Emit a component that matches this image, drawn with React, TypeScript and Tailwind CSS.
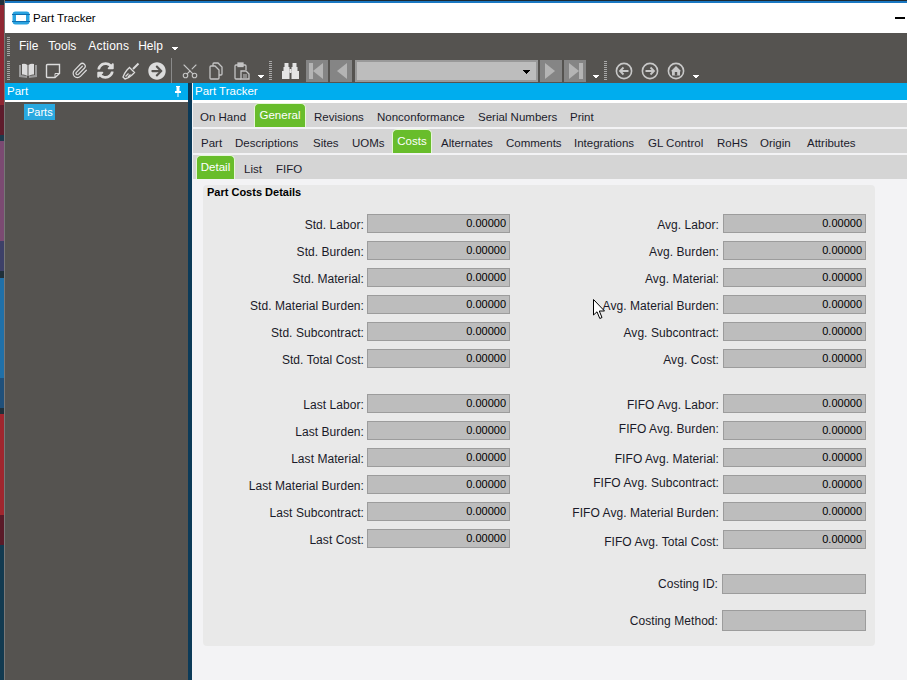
import type { ReactNode } from 'react'
import { Paperclip, Scissors } from 'lucide-react'
import { FaArrowCircleRight, FaSyncAlt } from 'react-icons/fa'

// desktop showing through on the left of the window
const desktop = [
  'h-[5px] bg-[#22323c]',
  'h-[100px] bg-[#8f2632]',
  'h-[30px] bg-[#5e1c2c]',
  'h-[6px] bg-[#1d3a4c]',
  'h-[100px] bg-[#7b4a72]',
  'h-[30px] bg-[#3d4068]',
  'h-[7px] bg-[#20303a]',
  'h-[100px] bg-[#2070a8]',
  'h-[30px] bg-[#20507a]',
  'h-[6px] bg-[#20303a]',
  'h-[101px] bg-[#a0262e]',
  'h-[30px] bg-[#5a1a28]',
  'h-[135px] bg-[#123a50]',
]

const topTabs = [
  { label: 'On Hand', cls: 'w-[55px] pl-[1px]' },
  { label: 'General', cls: 'w-[52px] mr-[8px]', active: true },
  { label: 'Revisions', cls: 'w-[63px]' },
  { label: 'Nonconformance', cls: 'w-[101px]' },
  { label: 'Serial Numbers', cls: 'w-[92px]' },
  { label: 'Print', cls: 'w-[40px]' },
]

const midTabs = [
  { label: 'Part', cls: 'w-[34px]' },
  { label: 'Descriptions', cls: 'w-[78px]' },
  { label: 'Sites', cls: 'w-[39px]' },
  { label: 'UOMs', cls: 'w-[40px]' },
  { label: 'Costs', cls: 'w-[40px] mr-[9px]', active: true },
  { label: 'Alternates', cls: 'w-[65px]' },
  { label: 'Comments', cls: 'w-[68px]' },
  { label: 'Integrations', cls: 'w-[74px]' },
  { label: 'GL Control', cls: 'w-[69px]' },
  { label: 'RoHS', cls: 'w-[43px]' },
  { label: 'Origin', cls: 'w-[47px]' },
  { label: 'Attributes', cls: 'w-[60px]' },
]

const subTabs = [
  { label: 'Detail', cls: 'w-[39px] mr-[9px]', active: true },
  { label: 'List', cls: 'w-[32px]' },
  { label: 'FIFO', cls: 'w-[40px]' },
]

type Row = { label: string; labelCls?: string; fieldCls?: string }

const stdRows: Row[] = [
  { label: 'Std. Labor:', labelCls: 'pt-[3px]' },
  { label: 'Std. Burden:', labelCls: 'pt-[2px]' },
  { label: 'Std. Material:', labelCls: 'pt-[2px]' },
  { label: 'Std. Material Burden:', labelCls: 'pt-[2px]' },
  { label: 'Std. Subcontract:', labelCls: 'pt-[2px]' },
  { label: 'Std. Total Cost:', labelCls: 'pt-[2px]' },
]

const avgRows: Row[] = [
  { label: 'Avg. Labor:', labelCls: 'pt-[3px]' },
  { label: 'Avg. Burden:', labelCls: 'pt-[3px]' },
  { label: 'Avg. Material:', labelCls: 'pt-[3px]' },
  { label: 'Avg. Material Burden:', labelCls: 'pt-[3px]' },
  { label: 'Avg. Subcontract:', labelCls: 'pt-[2px]' },
  { label: 'Avg. Cost:', labelCls: 'pt-[2px]' },
]

const lastRows: Row[] = [
  { label: 'Last Labor:', labelCls: 'pt-[2px]' },
  { label: 'Last Burden:', labelCls: 'pt-[2px]' },
  { label: 'Last Material:', labelCls: 'pt-[2px]' },
  { label: 'Last Material Burden:', labelCls: 'pt-[2px]' },
  { label: 'Last Subcontract:', labelCls: 'pt-[2px]' },
  { label: 'Last Cost:', labelCls: 'pt-[2px]' },
]

const fifoRows: Row[] = [
  { label: 'FIFO Avg. Labor:', labelCls: 'pt-[2px]' },
  { label: 'FIFO Avg. Burden:', labelCls: 'pb-[3px]' },
  { label: 'FIFO Avg. Material:', labelCls: 'pt-[2px]' },
  { label: 'FIFO Avg. Subcontract:', labelCls: 'pb-[3px]' },
  { label: 'FIFO Avg. Material Burden:', labelCls: 'pt-[2px]' },
  { label: 'FIFO Avg. Total Cost:', labelCls: 'pt-[6px]', fieldCls: 'mt-[1px]' },
]

function Grip({ cls }: { cls?: string }) {
  return (
    <div className={`flex w-[3px] flex-col gap-[1px] ${cls ?? ''}`}>
      {Array.from({ length: 10 }).map((_, i) => (
        <div key={i} className="h-[1px] w-[3px] bg-[#a8a8a8]" />
      ))}
    </div>
  )
}

function Caret({ cls }: { cls?: string }) {
  return (
    <div className={`flex flex-col items-center ${cls ?? ''}`}>
      <div className="h-[1px] w-[6px] bg-white" />
      <div className="h-[1px] w-[4px] bg-white" />
      <div className="h-[1px] w-[2px] bg-white" />
    </div>
  )
}

function Slot({ children }: { children: ReactNode }) {
  return <div className="flex h-[25px] w-[26px] items-center justify-center text-[#dcdcdc]">{children}</div>
}

function NavButton({ dir, end }: { dir: 'left' | 'right'; end?: boolean }) {
  const d = dir === 'left' ? 'M17 3 L7 11 L17 19 Z' : 'M5 3 L15 11 L5 19 Z'
  return (
    <div className="h-[22px] w-[22px] bg-[#858585]">
      <svg width="22" height="22" viewBox="0 0 22 22">
        <path d={d} fill="#b4b4b4" />
        {end && <rect x={dir === 'left' ? 3 : 15} y="3" width="4" height="16" fill="#b4b4b4" />}
      </svg>
    </div>
  )
}

function Tabs({ tabs, cls }: { tabs: { label: string; cls: string; active?: boolean }[]; cls: string }) {
  return (
    <div className={`flex h-[24px] items-end bg-[#d5d5d5] ${cls}`}>
      {tabs.map((t) =>
        t.active ? (
          <div
            key={t.label}
            className={`flex h-[24px] shrink-0 items-start justify-center rounded-t-[5px] border border-b-0 border-[#e6f7d8] bg-[#68bd2b] pt-[3px] text-white ${t.cls}`}
          >
            {t.label}
          </div>
        ) : (
          <div key={t.label} className={`h-[24px] shrink-0 pt-[6px] text-[#1c1c2c] ${t.cls}`}>
            {t.label}
          </div>
        ),
      )}
    </div>
  )
}

function Field({ value, cls }: { value?: string; cls?: string }) {
  return (
    <div
      className={`h-[19px] w-[143px] shrink-0 border border-[#9c9c9c] bg-[#bdbdbd] pr-[3px] text-right text-[11px] leading-[17px] text-black ${cls ?? ''}`}
    >
      {value}
    </div>
  )
}

function Rows({ rows, gap }: { rows: Row[]; gap: string }) {
  return (
    <div className="flex flex-col gap-[8px]">
      {rows.map((r) => (
        <div key={r.label} className={`flex h-[19px] items-center justify-end ${gap}`}>
          <div className={`whitespace-nowrap text-[12px] tracking-[0.06px] text-[#1a1a28] ${r.labelCls ?? ''}`}>{r.label}</div>
          <Field value="0.00000" cls={r.fieldCls} />
        </div>
      ))}
    </div>
  )
}

export default function App() {
  return (
    <div className="relative flex h-[680px] w-[907px] overflow-hidden bg-[#555350] font-['Liberation_Sans',Arial,sans-serif] text-[12px]">
      <div className="w-[4px] shrink-0">
        {desktop.map((c, i) => (
          <div key={i} className={c} />
        ))}
      </div>

      <div className="flex min-w-0 flex-1 flex-col border-l border-[#777]">
        <div className="h-[1px] bg-[#1c2a33]" />
        <div className="h-[2px] bg-[#1a78c2]" />

        {/* title bar */}
        <div className="flex h-[30px] items-center bg-white pl-[7px] pr-[2px]">
          <svg width="18" height="14" viewBox="0 0 18 14">
            <rect x="0.5" y="0.5" width="17" height="13" rx="3" fill="#2aa3e0" />
            <rect x="0" y="3" width="18" height="1" fill="#0f6fb0" />
            <rect x="0" y="10" width="18" height="1" fill="#0f6fb0" />
            <rect x="4" y="4" width="10" height="6" fill="#ffffff" />
          </svg>
          <span className="ml-[3px] pt-[1px] text-[11.5px] text-black">Part Tracker</span>
          <div className="ml-auto h-[2px] w-[10px] bg-black" />
        </div>

        {/* menu */}
        <div className="flex h-[25px] items-start pl-[2px] text-white">
          <Grip cls="mt-[4px]" />
          <div className="mt-[4px] flex text-[12px]">
            <span className="ml-[9px]">File</span>
            <span className="ml-[10px]">Tools</span>
            <span className="ml-[12px] tracking-[0.2px]">Actions</span>
            <span className="ml-[9px]">Help</span>
          </div>
          <Caret cls="ml-[9px] mt-[14px]" />
        </div>

        {/* toolbar */}
        <div className="flex h-[25px] items-center pl-[2px]">
          <Grip cls="mr-[4px]" />
          <Slot>
            <svg width="18" height="15" viewBox="0 0 18 15" fill="currentColor" className="ml-[1px]">
              <path d="M0 2 L2 2 L2 12 L8 13 L8 15 L0 14 Z M18 2 L16 2 L16 12 L10 13 L10 15 L18 14 Z" fill="#9a9a9a" />
              <path d="M3 1 Q6 0 8.5 2 L8.5 13 Q6 11 3 11.5 Z M15 1 Q12 0 9.5 2 L9.5 13 Q12 11 15 11.5 Z" />
            </svg>
          </Slot>
          <Slot>
            <svg width="16" height="16" viewBox="0 0 16 16" fill="none" stroke="#dcdcdc" strokeWidth="1.4">
              <path d="M1.5 2.5 Q1.5 1.5 2.5 1.5 H14.5 V10.5 L10 14.5 H2.5 Q1.5 14.5 1.5 13.5 Z" />
              <path d="M14.5 10.5 H10 V14.5" strokeWidth="1" />
            </svg>
          </Slot>
          <Slot>
            <Paperclip size={17} strokeWidth={1.7} />
          </Slot>
          <Slot>
            <FaSyncAlt size={17} />
          </Slot>
          <Slot>
            <svg width="18" height="18" viewBox="0 0 18 18" fill="none" stroke="currentColor" strokeWidth="1.3">
              <path d="M11 7 L16.5 1.5" strokeWidth="2" />
              <path d="M7.5 5.5 L12.5 10.5 L10 13 Q7 16 3 17 L1 15 Q2.5 11 5 8 Z" fill="#555350" />
              <path d="M3.5 14.5 L6.5 11.5 M6 15 L8.5 12.5" />
            </svg>
          </Slot>
          <Slot>
            <FaArrowCircleRight size={18} />
          </Slot>
          <div className="ml-[1px] mt-[1px] h-[26px] w-[1px] bg-[#8a8a8a]" />
          <div className="ml-[5px] flex">
            <Slot>
              <Scissors size={18} strokeWidth={1.5} className="-rotate-90 text-[#c4c4c4]" />
            </Slot>
            <Slot>
              <svg width="16" height="18" viewBox="0 0 16 18" fill="none" stroke="#c4c4c4" strokeWidth="1.3">
                <path d="M5 4 V2 Q5 1 6 1 H10 L14 5 V12 Q14 13 13 13 H11" />
                <path d="M2 5 Q2 4 3 4 H7 L11 8 V16 Q11 17 10 17 H3 Q2 17 2 16 Z" />
              </svg>
            </Slot>
            <Slot>
              <svg width="16" height="18" viewBox="0 0 16 18" fill="none" stroke="#c4c4c4" strokeWidth="1.3">
                <path d="M4 3 H2 Q1 3 1 4 V16 Q1 17 2 17 H7" />
                <path d="M9 3 H11 Q12 3 12 4 V8" />
                <rect x="4" y="1" width="5" height="3.5" fill="#c4c4c4" />
                <path d="M7 9 H12 L15 12 V17 H7 Z" />
                <path d="M9 13 H13 M9 15 H13" strokeWidth="1" />
              </svg>
            </Slot>
          </div>
          <Caret cls="ml-[3px] mr-[5px] mt-[12px]" />
          <Grip />
          <div className="ml-[5px] flex h-[25px] w-[27px] items-center justify-center">
            <svg width="17" height="16" viewBox="0 0 17 16" fill="#e4e4e4">
              <rect x="2.5" y="0" width="4" height="4" />
              <rect x="10.5" y="0" width="4" height="4" />
              <rect x="1.5" y="4" width="6" height="5" />
              <rect x="9.5" y="4" width="6" height="5" />
              <rect x="0" y="8" width="7.5" height="8" />
              <rect x="9.5" y="8" width="7.5" height="8" />
              <rect x="7.5" y="6" width="2" height="4" />
            </svg>
          </div>
          <div className="ml-[2px] flex items-center gap-[2px]">
            <NavButton dir="left" end />
            <NavButton dir="left" />
          </div>
          <div className="relative mx-[2px] ml-[3px] h-[22px] w-[183px] border-2 border-[#999] bg-[#bdbdbd]">
            <div className="absolute right-[6px] top-[8px] flex flex-col items-center">
              <div className="h-[1px] w-[7px] bg-black" />
              <div className="h-[1px] w-[5px] bg-black" />
              <div className="h-[1px] w-[3px] bg-black" />
              <div className="h-[1px] w-[1px] bg-black" />
            </div>
          </div>
          <div className="flex items-center gap-[2px]">
            <NavButton dir="right" />
            <NavButton dir="right" end />
          </div>
          <Caret cls="ml-[7px] mr-[5px] mt-[12px]" />
          <Grip />
          <div className="ml-[4px] flex">
            <Slot>
              <svg width="18" height="18" viewBox="0 0 18 18" fill="none" stroke="#c8c8c8" strokeWidth="1.6">
                <circle cx="9" cy="9" r="7.6" />
                <path d="M13.5 9 H5.5 M8.5 5.5 L5 9 L8.5 12.5" strokeWidth="1.8" />
              </svg>
            </Slot>
            <Slot>
              <svg width="18" height="18" viewBox="0 0 18 18" fill="none" stroke="#c8c8c8" strokeWidth="1.6">
                <circle cx="9" cy="9" r="7.6" />
                <path d="M4.5 9 H12.5 M9.5 5.5 L13 9 L9.5 12.5" strokeWidth="1.8" />
              </svg>
            </Slot>
            <Slot>
              <svg width="18" height="18" viewBox="0 0 18 18" fill="none" stroke="#c8c8c8" strokeWidth="1.6">
                <circle cx="9" cy="9" r="7.6" />
                <path d="M3.8 9.2 L9 4 L14.2 9.2 L13 9.2 L13 13.5 L5 13.5 L5 9.2 Z" fill="#c8c8c8" stroke="none" />
                <rect x="7.8" y="10" width="2.4" height="3.5" fill="#555350" stroke="none" />
              </svg>
            </Slot>
          </div>
          <Caret cls="ml-[4px] mt-[12px]" />
        </div>

        <div className="flex min-h-0 flex-1">
          {/* tree panel */}
          <div className="flex w-[183px] shrink-0 flex-col">
            <div className="flex h-[17px] items-center justify-between bg-[#00adee] pl-[2px] pr-[6px] text-[11.5px] text-white">
              <span>Part</span>
              <svg width="8" height="11" viewBox="0 0 8 11" fill="#ffffff">
                <path d="M2 0 H6 V1 H5.5 V5 H7 V7 H4.5 V11 H3.5 V7 H1 V5 H2.5 V1 H2 Z" />
              </svg>
            </div>
            <div className="h-[2px] bg-white" />
            <div className="pl-[19px] pt-[2px]">
              <div className="h-[16px] w-[31px] bg-[#29a9e0] pl-[3px] text-[11px] leading-[16px] text-white">Parts</div>
            </div>
          </div>

          {/* splitter */}
          <div className="w-[4px] shrink-0 bg-[#0b3a58]" />
          <div className="w-[1px] shrink-0 bg-[#f3f3f5]" />

          {/* main panel */}
          <div className="flex min-w-0 flex-1 flex-col bg-[#f3f3f5]">
            <div className="flex h-[17px] items-center bg-[#00adee] pl-[2px] text-[11.5px] text-white">Part Tracker</div>
            <div className="h-[3px] bg-white" />
            <div className="text-[11.5px]">
              <Tabs tabs={topTabs} cls="pl-[6px]" />
              <div className="h-[2px] bg-[#f3f3f5]" />
              <Tabs tabs={midTabs} cls="pl-[8px]" />
              <div className="h-[2px] bg-[#f3f3f5]" />
              <Tabs tabs={subTabs} cls="pl-[3px]" />
            </div>

            {/* costs card */}
            <div className="ml-[10px] mt-[6px] h-[461px] w-[672px] rounded-[4px] bg-[#e9e9e9]">
              <div className="h-[29px] pl-[4px] pt-[1px] text-[11px] font-bold leading-[13px] text-black">Part Costs Details</div>
              <div className="grid grid-cols-[307px_356px]">
                <Rows rows={stdRows} gap="gap-[3px]" />
                <Rows rows={avgRows} gap="gap-[4px]" />
              </div>
              <div className="mt-[26px] grid grid-cols-[307px_356px]">
                <Rows rows={lastRows} gap="gap-[3px]" />
                <Rows rows={fifoRows} gap="gap-[4px]" />
              </div>
              <div className="mt-[26px] flex w-[663px] flex-col items-end gap-[16px]">
                <div className="flex items-center gap-[4px]">
                  <div className="text-[12px] tracking-[0.06px] text-[#1a1a28]">Costing ID:</div>
                  <Field cls="h-[20px] w-[144px]" />
                </div>
                <div className="flex items-center gap-[4px]">
                  <div className="text-[12px] tracking-[0.06px] text-[#1a1a28]">Costing Method:</div>
                  <Field cls="h-[21px] w-[144px]" />
                </div>
              </div>
            </div>
          </div>
        </div>
      </div>

      {/* mouse pointer */}
      <svg width="13" height="21" viewBox="0 0 13 21" className="absolute left-[593px] top-[299px]">
        <path d="M0.5 0.5 L0.5 16 L4 12.8 L6.8 19.5 L9 18.5 L6.3 12 L11.5 12 Z" fill="#ffffff" stroke="#000000" strokeWidth="1" />
      </svg>
    </div>
  )
}
